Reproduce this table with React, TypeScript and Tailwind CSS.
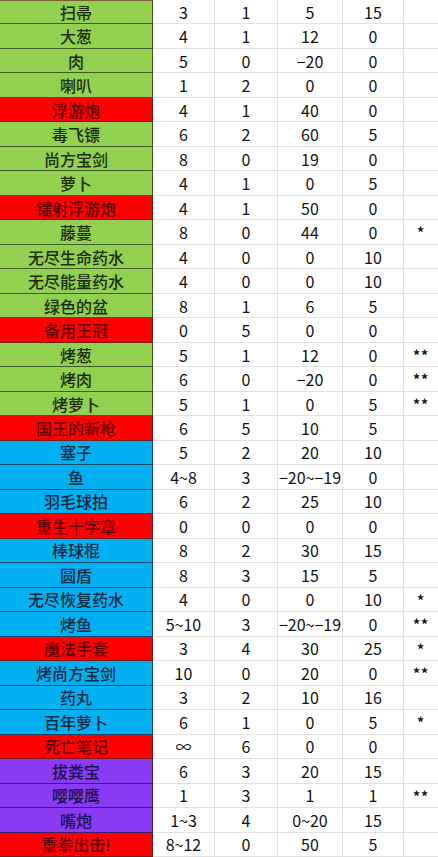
const G = 'green';
const R = 'red';
const B = 'blue';
const P = 'purple';

type Row = [string, string, string, string, string, string, string];

const rows: Row[] = [
  ['扫帚', G, '3', '1', '5', '15', ''],
  ['大葱', G, '4', '1', '12', '0', ''],
  ['肉', G, '5', '0', '−20', '0', ''],
  ['喇叭', G, '1', '2', '0', '0', ''],
  ['浮游炮', R, '4', '1', '40', '0', ''],
  ['毒飞镖', G, '6', '2', '60', '5', ''],
  ['尚方宝剑', G, '8', '0', '19', '0', ''],
  ['萝卜', G, '4', '1', '0', '5', ''],
  ['镭射浮游炮', R, '4', '1', '50', '0', ''],
  ['藤蔓', G, '8', '0', '44', '0', '*'],
  ['无尽生命药水', G, '4', '0', '0', '10', ''],
  ['无尽能量药水', G, '4', '0', '0', '10', ''],
  ['绿色的盆', G, '8', '1', '6', '5', ''],
  ['备用王冠', R, '0', '5', '0', '0', ''],
  ['烤葱', G, '5', '1', '12', '0', '**'],
  ['烤肉', G, '6', '0', '−20', '0', '**'],
  ['烤萝卜', G, '5', '1', '0', '5', '**'],
  ['国王的新枪', R, '6', '5', '10', '5', ''],
  ['塞子', B, '5', '2', '20', '10', ''],
  ['鱼', B, '4~8', '3', '−20~−19', '0', ''],
  ['羽毛球拍', B, '6', '2', '25', '10', ''],
  ['重生十字章', R, '0', '0', '0', '0', ''],
  ['棒球棍', B, '8', '2', '30', '15', ''],
  ['圆盾', B, '8', '3', '15', '5', ''],
  ['无尽恢复药水', B, '4', '0', '0', '10', '*'],
  ['烤鱼', B, '5~10', '3', '−20~−19', '0', '**'],
  ['魔法手套', R, '3', '4', '30', '25', '*'],
  ['烤尚方宝剑', B, '10', '0', '20', '0', '**'],
  ['药丸', B, '3', '2', '10', '16', ''],
  ['百年萝卜', B, '6', '1', '0', '5', '*'],
  ['死亡笔记', R, '∞', '6', '0', '0', ''],
  ['拔粪宝', P, '6', '3', '20', '15', ''],
  ['嘤嘤鹰', P, '1', '3', '1', '1', '**'],
  ['嘴炮', P, '1~3', '4', '0~20', '15', ''],
  ['重拳出击!', R, '8~12', '0', '50', '5', ''],
];

const nameStyle: Record<string, string> = {
  green: 'bg-[#92d050] text-[#1c2a0c] border-[#3d5a22]',
  red: 'bg-[#ff0000] text-[#5c0000] border-[#7a1a1a]',
  blue: 'bg-[#00b0f0] text-[#0c2a44] border-[#1a4a6a]',
  purple: 'bg-[#8a3cf5] text-[#1e0f4a] border-[#3a1f6a]',
};

export default function App() {
  return (
    <div className="w-[438px] h-[857px] overflow-hidden bg-white font-['Noto_Sans_CJK_SC','Noto_Sans',sans-serif] text-[16px] text-[#111]">
      <div className="grid h-[857px] grid-cols-[153px_62px_63px_65px_61px_34px] grid-rows-[repeat(35,minmax(0,1fr))]">
        {rows.map(([name, color, a, b, c, d, mark], i) => (
          <div key={i} className="contents">
            <div
              className={`flex items-center justify-center border-r border-b font-medium leading-none ${nameStyle[color]} ${
                i === 0 ? 'border-t border-t-[#7a5a30]' : ''
              }`}
            >
              {name}
            </div>
            {[a, b, c, d].map((v, j) => (
              <div
                key={j}
                className="flex items-center justify-center border-r border-b border-[#e2e2e2] leading-none"
              >
                {v}
              </div>
            ))}
            <div className="flex items-start justify-center border-b border-[#e2e2e2] pt-[5px] text-[14px] font-bold leading-none tracking-[1px]">
              {mark}
            </div>
          </div>
        ))}
      </div>
    </div>
  );
}
